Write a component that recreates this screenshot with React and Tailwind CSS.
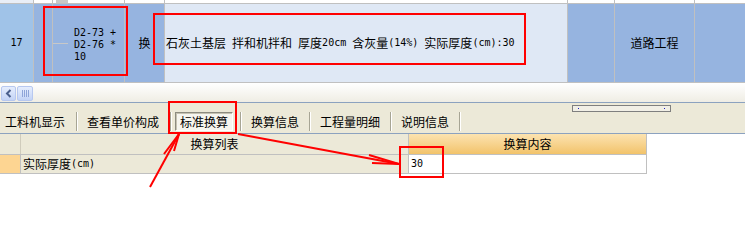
import React from "react";

// half-width runs rendered in a 6px-wide mono face, like the original bitmap font
function Mixed({ text }) {
  const parts = text.match(/[\x20-\x7e]+|[^\x20-\x7e]+/g) || [];
  return (
    <>
      {parts.map((p, i) =>
        /^[\x20-\x7e]+$/.test(p) ? (
          <span key={i} className="whitespace-pre text-[10px] font-['DejaVu_Sans_Mono',monospace]">
            {p}
          </span>
        ) : (
          <span key={i}>{p}</span>
        )
      )}
    </>
  );
}

const tabs = [
  { label: "工料机显示", ml: "ml-[5px]" },
  { label: "查看单价构成", ml: "ml-[9px]" },
];

const tabsRight = [
  { label: "换算信息" },
  { label: "工程量明细" },
  { label: "说明信息" },
];

function Sep({ className = "" }) {
  return <div className={"h-[19px] w-[2px] border-l border-[#a7a594] border-r border-r-white " + className} />;
}

export default function App() {
  return (
    <div className="relative h-[250px] w-[745px] overflow-hidden bg-white text-[12px] leading-none text-black font-['Noto_Sans_CJK_SC',sans-serif]">
      {/* previous row sliver */}
      <div className="flex h-[4px] border-b border-[#c0c0c0]">
        <div className="w-[34px] border-r border-[#c0c0c0] bg-[#e9eef6]" />
        <div className="w-[19px] border-r border-[#c0c0c0]" />
        <div className="w-[72px] border-r border-[#c0c0c0] pl-[3px]">
          <div className="h-[3px] w-[12px] bg-[#c8c8c8]" />
        </div>
        <div className="w-[40px] border-r border-[#c0c0c0]" />
        <div className="w-[403px] border-r border-[#c0c0c0]" />
        <div className="w-[47px] border-r border-[#c0c0c0]" />
        <div className="w-[80px] border-r border-[#c0c0c0]" />
        <div className="flex-1" />
      </div>

      {/* main row */}
      <div className="flex h-[79px] border-b border-[#c0c0c0]">
        <div className="flex w-[34px] items-center justify-center border-r border-[#c0c0c0] bg-[#a0c3e8]">
          <Mixed text="17" />
        </div>
        <div className="w-[19px] border-r border-[#c0c0c0] bg-[#96b4e0]" />
        <div className="flex w-[72px] items-center border-r border-[#c0c0c0] bg-[#96b4e0]">
          <div className="h-px w-[15px] bg-[#c8c8c8]" />
          <div className="ml-[6px] mt-[3px] whitespace-pre text-[10px] leading-[12px] font-['DejaVu_Sans_Mono',monospace]">
            {"D2-73 +\nD2-76 *\n10"}
          </div>
        </div>
        <div className="flex w-[40px] items-center justify-center border-r border-[#c0c0c0] bg-[#96b4e0]">换</div>
        <div className="flex w-[403px] items-center whitespace-pre border-r border-[#c0c0c0] bg-[#dfe8f5] pl-[1px]">
          <Mixed text="石灰土基层 拌和机拌和 厚度20cm 含灰量(14%) 实际厚度(cm):30" />
        </div>
        <div className="w-[47px] border-r border-[#c0c0c0] bg-[#96b4e0]" />
        <div className="flex w-[80px] items-center justify-center border-r border-[#c0c0c0] bg-[#96b4e0]">道路工程</div>
        <div className="flex-1 bg-[#96b4e0]" />
      </div>

      {/* horizontal scrollbar */}
      <div className="flex h-[19px] items-end gap-[1px] bg-gradient-to-b from-white to-[#efede4] pb-[1px] pl-[1px]">
        <div className="flex h-[15px] w-[15px] items-center justify-center rounded-[2px] border border-[#b7c8f0] bg-gradient-to-b from-[#e6eefd] to-[#c3d3f6]">
          <svg width="7" height="9" viewBox="0 0 7 9">
            <path d="M5.5 1 L2 4.5 L5.5 8" fill="none" stroke="#4a5f8c" strokeWidth="2" />
          </svg>
        </div>
        <div className="flex h-[15px] w-[16px] items-center justify-center gap-[1px] rounded-[2px] border border-[#b7c8f0] bg-gradient-to-b from-[#e6eefd] to-[#c3d3f6]">
          <div className="h-[7px] w-px bg-[#8ea4d8]" />
          <div className="h-[7px] w-px bg-[#8ea4d8]" />
          <div className="h-[7px] w-px bg-[#8ea4d8]" />
          <div className="h-[7px] w-px bg-[#8ea4d8]" />
        </div>
      </div>

      {/* tab bar */}
      <div className="relative flex h-[32px] items-end border-y border-[#8ca2bf] bg-[#ece9d8] pb-[2px]">
        <div className="absolute left-[572px] top-[2px] flex h-[7px] w-[99px] items-center justify-between border border-[#7f7f7f] bg-[#f1efe6] px-[5px]">
          <div className="h-px w-px bg-[#2020c0]" />
          <div className="h-px w-px bg-[#2020c0]" />
        </div>
        {tabs.map((t) => (
          <React.Fragment key={t.label}>
            <div className={"flex h-[19px] items-center " + t.ml}>{t.label}</div>
            <Sep className="ml-[11px]" />
          </React.Fragment>
        ))}
        <div className="ml-[3px] flex h-[19px] w-[58px] items-center justify-center border border-[#8d8b80] border-b-white border-r-white bg-[#f6f5ef] shadow-[inset_1px_1px_0_#c5c2b2]">
          标准换算
        </div>
        <Sep className="ml-[7px]" />
        {tabsRight.map((t) => (
          <React.Fragment key={t.label}>
            <div className="ml-[9px] flex h-[19px] items-center">{t.label}</div>
            <Sep className="ml-[10px]" />
          </React.Fragment>
        ))}
      </div>

      {/* conversion grid */}
      <div className="w-[647px]">
        <div className="flex h-[21px] border-b border-[#c0c0c0]">
          <div className="w-[21px] border-r border-[#d0ccbc] bg-[#ece9d8]" />
          <div className="flex w-[388px] items-center justify-center border-r border-[#c0c0c0] bg-[#ece9d8]">换算列表</div>
          <div className="flex w-[238px] items-center justify-center border-r border-[#c0c0c0] bg-gradient-to-b from-[#fce3b0] to-[#f2c36a]">换算内容</div>
        </div>
        <div className="flex h-[19px] border-b border-[#c0c0c0]">
          <div className="w-[21px] border-r border-[#c0c0c0] bg-[#fdd592]" />
          <div className="flex w-[388px] items-center border-r border-[#c0c0c0] bg-[#ece9d8] pl-[2px]">
            <Mixed text="实际厚度(cm)" />
          </div>
          <div className="flex w-[238px] items-center border-r border-[#c0c0c0] bg-white pl-[2px]">
            <Mixed text="30" />
          </div>
        </div>
      </div>

      {/* annotations */}
      <div className="absolute left-[43px] top-[6px] h-[70px] w-[85px] border-2 border-[#ff0000]" />
      <div className="absolute left-[153px] top-[13px] h-[52px] w-[373px] border-2 border-[#ff0000]" />
      <div className="absolute left-[168px] top-[101px] h-[33px] w-[69px] border-2 border-[#ff0000]" />
      <div className="absolute left-[399px] top-[146px] h-[32px] w-[45px] border-2 border-[#ff0000]" />
      <svg className="pointer-events-none absolute left-0 top-0" width="745" height="250">
        <g fill="none" stroke="#ff0000" strokeWidth="2">
          <path d="M238 134 L399 164" />
          <path d="M369 155 L399 164 L372 163" />
          <path d="M150 187 L179 134" />
          <path d="M164 154 L179 134" />
          <path d="M174 151 L179 134" />
        </g>
      </svg>
    </div>
  );
}
